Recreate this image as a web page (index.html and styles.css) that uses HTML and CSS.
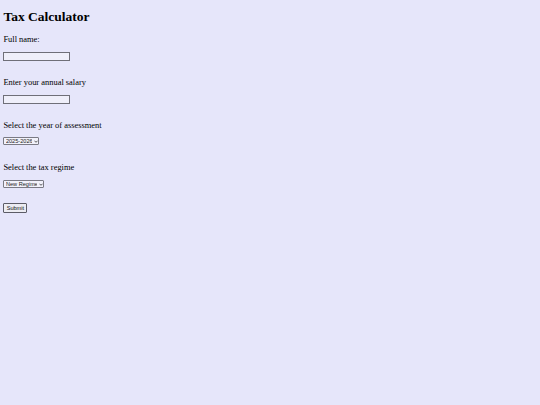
FILE: index.html
```html
<!DOCTYPE html>
<html>
<head>
<meta charset="utf-8">
<title>Tax Calculator</title>
<link rel="stylesheet" href="styles.css">
</head>
<body class="page">
<h1 class="title">Tax Calculator</h1>
<form class="tax-form">
  <div class="group">
    <p class="label">Full name:</p>
    <input class="field" type="text">
  </div>
  <div class="group">
    <p class="label">Enter your annual salary</p>
    <input class="field" type="text">
  </div>
  <div class="group">
    <p class="label">Select the year of assessment</p>
    <span class="select-wrap year">
      <select class="choice"><option>2025-2026</option></select>
      <svg class="chev" viewBox="0 0 6 4" width="4" height="3"><path d="M0.6 0.8 L3 3.2 L5.4 0.8" fill="none" stroke="#222" stroke-width="1.1"/></svg>
    </span>
  </div>
  <div class="group last">
    <p class="label">Select the tax regime</p>
    <span class="select-wrap regime">
      <select class="choice"><option>New Regime</option></select>
      <svg class="chev" viewBox="0 0 6 4" width="4" height="3"><path d="M0.6 0.8 L3 3.2 L5.4 0.8" fill="none" stroke="#222" stroke-width="1.1"/></svg>
    </span>
  </div>
  <button class="submit" type="button">Submit</button>
</form>
</body>
</html>
```

FILE: styles.css
```css
html {
  background: #e6e6fa;
}
.page {
  margin: 0;
  padding: 0 3.4px;
  font-family: "Liberation Serif", serif;
  color: #000;
}
.title {
  font-size: 13.5px;
  line-height: 16px;
  font-weight: bold;
  margin: 9px 0 0;
}
.tax-form {
  display: flex;
  flex-direction: column;
  align-items: flex-start;
  margin-top: 9.2px;
}
.group {
  display: flex;
  flex-direction: column;
  align-items: flex-start;
  margin-bottom: 15.8px;
}
.group.last {
  margin-bottom: 14px;
}
.label {
  font-size: 8.44px;
  line-height: 10px;
  margin: 0 0 7.9px;
}
.field {
  box-sizing: border-box;
  width: 67px;
  height: 9px;
  margin: 0;
  padding: 0;
  border: 1px solid #6f6f78;
  background: #efeffa;
  font-family: "Liberation Sans", sans-serif;
  font-size: 5.6px;
}
.select-wrap {
  position: relative;
  display: inline-block;
  margin-bottom: 1px;
}
.choice {
  -webkit-appearance: none;
  appearance: none;
  box-sizing: border-box;
  height: 8px;
  margin: 0;
  padding: 0 6px 0 1.5px;
  border: 1px solid #7a7a84;
  border-radius: 1px;
  background: #f2f2fb;
  color: #222;
  font-family: "Liberation Sans", sans-serif;
  font-size: 5.6px;
  line-height: 6px;
  display: block;
}
.year .choice {
  width: 36px;
}
.regime .choice {
  width: 41px;
}
.chev {
  position: absolute;
  right: 1.6px;
  top: 2.6px;
  pointer-events: none;
}
.submit {
  box-sizing: border-box;
  height: 10px;
  width: 24px;
  margin: 0;
  padding: 0;
  border: 1px solid #5c5c66;
  border-radius: 1px;
  background: #ececf2;
  color: #111;
  font-family: "Liberation Sans", sans-serif;
  font-size: 5.6px;
  line-height: 6px;
}
```
